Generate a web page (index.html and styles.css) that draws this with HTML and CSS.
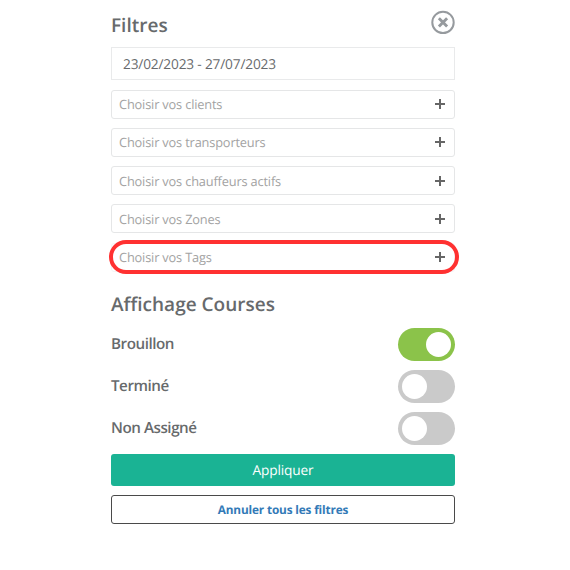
FILE: index.html
```html
<!DOCTYPE html>
<html lang="fr">
<head>
    <meta charset="UTF-8">
    <meta name="viewport" content="width=device-width, initial-scale=1.0">
    <title>Filtres</title>
    <link rel="stylesheet" href="styles.css">
</head>
<body>
    <div class="panel">
        <div class="panel-header">
            <h2>Filtres</h2>
            <svg class="close" viewBox="0 0 24 24">
                <circle cx="12" cy="12.4" r="10.7"/>
                <path d="M7.9 8.3l8.2 8.2M16.1 8.3l-8.2 8.2"/>
            </svg>
        </div>

        <div class="date-range">23/02/2023 - 27/07/2023</div>

        <div class="selects">
            <div class="select"><span>Choisir vos clients</span><i class="plus"></i></div>
            <div class="select"><span>Choisir vos transporteurs</span><i class="plus"></i></div>
            <div class="select"><span>Choisir vos chauffeurs actifs</span><i class="plus"></i></div>
            <div class="select"><span>Choisir vos Zones</span><i class="plus"></i></div>
            <div class="select highlight"><span>Choisir vos Tags</span><i class="plus"></i></div>
        </div>

        <h2 class="section-title">Affichage Courses</h2>
        <div class="toggles">
            <div class="toggle-row"><span>Brouillon</span><div class="switch on"></div></div>
            <div class="toggle-row"><span>Terminé</span><div class="switch"></div></div>
            <div class="toggle-row"><span>Non Assigné</span><div class="switch"></div></div>
        </div>

        <button class="button apply">Appliquer</button>
        <button class="button cancel">Annuler tous les filtres</button>
    </div>
</body>
</html>
```
FILE: styles.css
```css
* {
    box-sizing: border-box;
}
body {
    font-family: "Open Sans", sans-serif;
    text-rendering: geometricPrecision;
    background-color: #fff;
    color: #676a6c;
    margin: 0;
}
.panel {
    width: 344px;
    margin-left: 111px;
    padding-top: 10px;
}
.panel-header {
    display: flex;
    justify-content: space-between;
    height: 37px;
}
h2 {
    margin: 0;
    font-size: 19px;
    line-height: 30px;
    font-weight: 600;
}
.close {
    width: 24px;
    height: 24px;
    overflow: visible;
    fill: none;
    stroke: #969a9e;
    stroke-width: 2;
}
.close path {
    stroke-width: 2.9;
}
.date-range {
    height: 33px;
    padding-left: 11px;
    border: 1px solid #e9eaeb;
    font-size: 13.7px;
    letter-spacing: -0.17px;
    line-height: 33px;
}
.selects {
    display: flex;
    flex-direction: column;
    gap: 9.25px;
    margin-top: 9.5px;
}
.select {
    position: relative;
    display: flex;
    align-items: center;
    justify-content: space-between;
    height: 29px;
    padding: 0 9px 0 7px;
    border: 1px solid #e5e6e7;
    border-radius: 3px;
    color: #a3a3a3;
    font-size: 12.8px;
    letter-spacing: -0.17px;
}
.plus {
    width: 10px;
    height: 10px;
    background: linear-gradient(#666, #666) center / 10px 2px no-repeat,
        linear-gradient(#666, #666) center / 2px 10px no-repeat;
}
.highlight {
    border-color: #f4f4f5;
}
.highlight::after {
    content: "";
    position: absolute;
    inset: -4px -5px -3px -3px;
    border: 4px solid #ff3131;
    border-radius: 17px;
}
.section-title {
    margin-top: 17px;
}
.toggles {
    display: flex;
    flex-direction: column;
    gap: 9px;
    margin-top: 9px;
}
.toggle-row {
    display: flex;
    align-items: center;
    justify-content: space-between;
    height: 33px;
    font-size: 15.2px;
    font-weight: 600;
}
.toggle-row span {
    letter-spacing: -0.46px;
}
.switch {
    display: flex;
    align-items: center;
    width: 57.5px;
    height: 33px;
    padding: 0 4px;
    border-radius: 17px;
    background-color: #cacaca;
}
.switch::before {
    content: "";
    width: 25px;
    height: 25px;
    border-radius: 50%;
    background-color: #fff;
}
.switch.on {
    justify-content: flex-end;
    background-color: #8bc34a;
}
.button {
    display: block;
    width: 100%;
    padding: 0;
    border-radius: 3px;
    font-family: inherit;
    text-rendering: inherit;
}
.apply {
    height: 32px;
    margin-top: 9px;
    padding-top: 1px;
    border: none;
    background-color: #1ab394;
    color: #fff;
    font-size: 13.7px;
    letter-spacing: -0.15px;
}
.cancel {
    height: 29px;
    margin-top: 9px;
    padding-top: 1px;
    border: 1px solid #4a4a4a;
    background-color: #fff;
    color: #337ab7;
    font-size: 11.8px;
    font-weight: 700;
    letter-spacing: -0.15px;
}
```
